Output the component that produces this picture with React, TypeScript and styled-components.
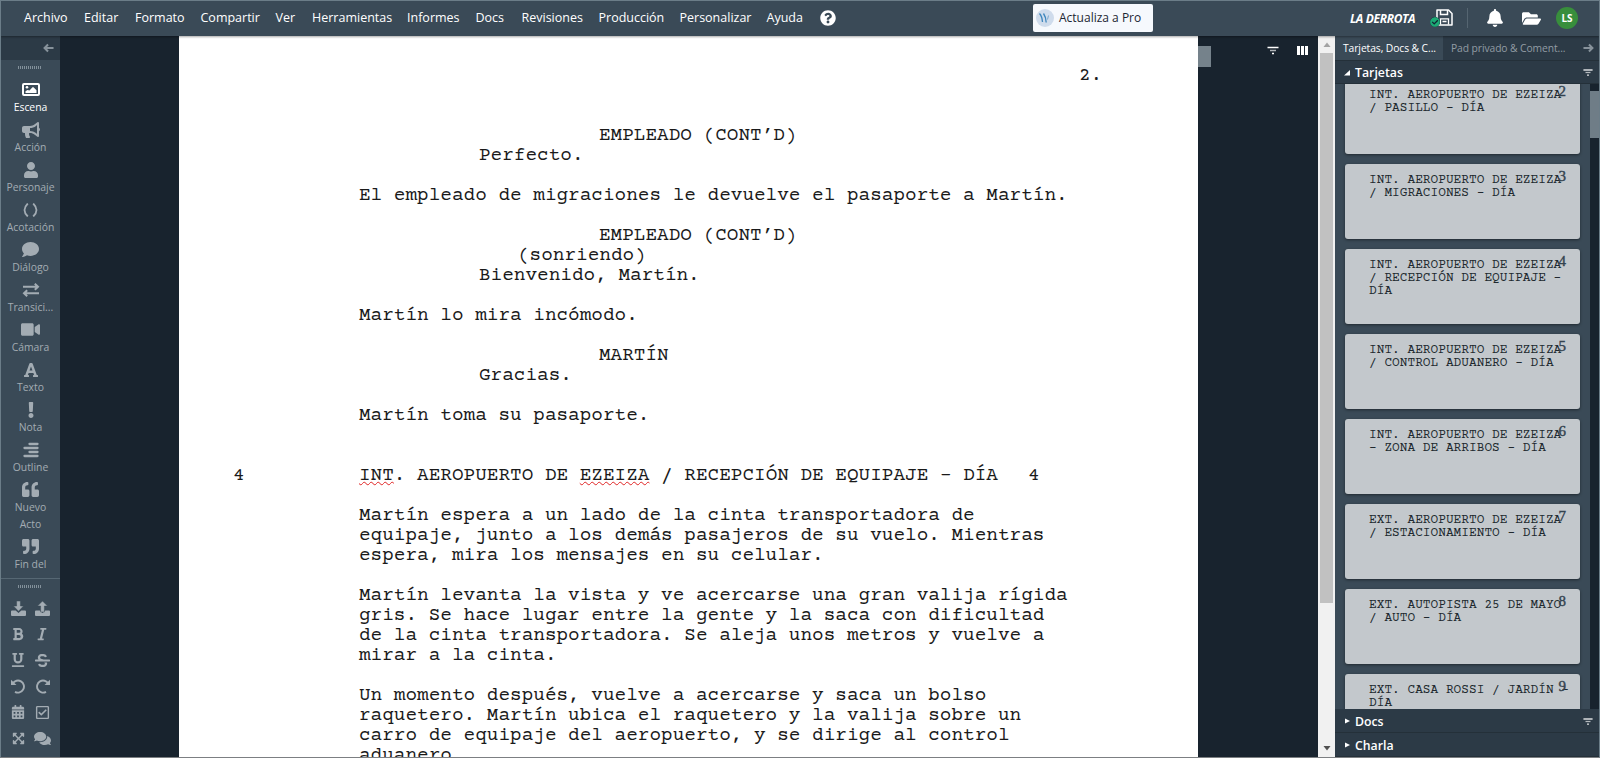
import React from 'react';
import styled, { createGlobalStyle } from 'styled-components';
import {
  FaBell, FaBold, FaBullhorn, FaCalendarAlt, FaCheckCircle, FaComment, FaComments, FaExclamation,
  FaExpandArrowsAlt, FaFolderOpen, FaFont, FaItalic, FaQuestionCircle, FaQuoteLeft, FaQuoteRight,
  FaRegCheckSquare, FaStrikethrough, FaUnderline, FaUser, FaVideo,
} from 'react-icons/fa';

const ui = '"Open Sans", "Noto Sans", sans-serif';
const mono = '"Courier Prime", "Liberation Mono", monospace';

const Global = createGlobalStyle`
  * { box-sizing: border-box; }
  body { margin: 0; background: #18232e; overflow: hidden; }
  svg { display: block; flex: none; }
`;

const Frame = styled.div`
  width: 1600px; height: 758px; display: flex; flex-direction: column; overflow: hidden;
  border: 1px solid #6b7d88; border-bottom-color: #7c7f82;
  background: #18232e; font-family: ${ui}; color: #fff;
`;
const Header = styled.header`
  height: 35px; flex: none; display: flex; align-items: center; background: #3a4a57; padding-bottom: 2px;
  position: relative; z-index: 2; box-shadow: 0 1px 2px rgba(0,0,0,.35);
`;
const Menu = styled.nav`display: flex; width: 815px; padding-left: 23px; align-items: center; height: 33px;`;
const MenuItem = styled.span<{ $w: number }>`
  width: ${p => p.$w}px; font-size: 12.5px; white-space: nowrap; line-height: 18px; flex: none;
`;
const Upgrade = styled.button`
  width: 120px; height: 28px; margin-left: 217px; border: 0; border-radius: 2px; background: #f6f9fd; color: #1c2733;
  padding: 0 0 0 3px; display: flex; align-items: center; gap: 5px; font: 12px ${ui}; white-space: nowrap; flex: none;
`;
const HeaderRight = styled.div`display: flex; align-items: center; margin-left: 197px; height: 33px;`;
const ScriptTitle = styled.span`width: 80px; font: italic 700 12px ${ui}; letter-spacing: -0.35px; white-space: nowrap; padding-top: 1px;`;
const SaveBox = styled.span`position: relative; width: 24px; height: 17px; padding-left: 6px;`;
const SaveBadge = styled.span`position: absolute; left: 0; top: 8px; color: #1ca974; background: #123; border-radius: 50%;`;
const Divider = styled.i`width: 1px; height: 20px; background: #556571; margin: 0 18px 0 13px;`;
const FolderSlot = styled.span`margin: 1px 15px 0 18px;`;
const Avatar = styled.span`
  width: 22px; height: 22px; border-radius: 50%; background: #388e3c; font: 700 10px ${ui};
  display: flex; align-items: center; justify-content: center;
`;
const Body = styled.div`display: flex; flex: 1; min-height: 0;`;

const SideBar = styled.aside`width: 59px; flex: none; background: #3a4a57; display: flex; flex-direction: column; overflow: hidden;`;
const SideTop = styled.div`height: 24px; flex: none; background: #2c3a46; display: flex; align-items: center; justify-content: flex-end; padding: 0 6px 1px 0; color: #87929b;`;
const Grip = styled.i`
  display: block; width: 24px; height: 3px; flex: none; margin: 6px auto 0 17px;
  background: repeating-linear-gradient(90deg, #82909a 0 1px, transparent 1px 2px);
`;
const Elements = styled.div`height: 519px; flex: none; overflow: hidden; border-bottom: 1px solid #566773;`;
const ElementList = styled.div`padding-top: 11px;`;
const Element = styled.div<{ $active?: boolean }>`
  color: ${p => (p.$active ? '#fff' : '#a3acb3')}; text-align: center; font-size: 10.4px; line-height: 17px;
  padding: 0 7px 4px; display: flex; flex-direction: column; align-items: center;
`;
const IconSlot = styled.div`height: 19px; display: flex; align-items: center; justify-content: center;`;
const Tools = styled.div`display: grid; grid-template-columns: 24px 24px; grid-auto-rows: 26px; padding: 7px 0 0 5px; color: #a3acb3;`;
const Tool = styled.span`display: flex; align-items: center; justify-content: center;`;

const Stage = styled.main`flex: 1; display: flex; padding-left: 119px; min-width: 0; overflow: hidden;`;
const Sheet = styled.article`
  width: 1019px; flex: none; background: #fff; color: #1a1a1a; padding-top: 30px;
  font: 19.39px/20px ${mono};
`;
const Line = styled.div<{ $indent: number }>`height: 20px; padding-left: ${p => p.$indent}px; white-space: pre;`;
const SceneLine = styled.div`height: 20px; display: flex; padding-left: 54px; white-space: pre;`;
const SceneNo = styled.span`width: 126px;`;
const SceneText = styled.span`width: 669px;`;
const Misspelt = styled.span`
  text-decoration: underline wavy #e02424; text-decoration-thickness: 1.3px; text-underline-offset: 1px; text-decoration-skip-ink: none;
`;
const StageRight = styled.div`flex: 1; display: flex; padding-top: 10px; justify-content: space-between;`;
const Handle = styled.i`width: 13px; height: 21px; background: #75828b;`;
const ViewTools = styled.div`display: flex; gap: 18px; padding-right: 10px; color: #fff;`;
const Scroll = styled.div`width: 17px; flex: none; background: #f1f1f1; display: flex; flex-direction: column; align-items: center; justify-content: space-between; padding: 5px 0 5px;`;
const Thumb = styled.i`width: 13px; height: 550px; background: #c1c1c1; margin-top: 4px; margin-bottom: auto;`;

const Panel = styled.aside`width: 264px; flex: none; background: #3a4a57; display: flex; flex-direction: column;`;
const Tabs = styled.div`height: 25px; flex: none; display: flex; background: #2c3a46; border-bottom: 1px solid #243039; align-items: center; font-size: 10.3px; letter-spacing: -0.08px; color: #87929b;`;
const Tab = styled.span<{ $active?: boolean }>`
  height: 24px; line-height: 24px; white-space: nowrap; width: ${p => (p.$active ? 108 : 140)}px; padding-left: 8px;
  flex: none; color: ${p => (p.$active ? '#fff' : '#929ca4')}; background: ${p => (p.$active ? '#3a4a57' : 'transparent')};
`;
const Section = styled.div<{ $h: number }>`
  height: ${p => p.$h}px; flex: none; background: #2c3a46; display: flex; align-items: center; border-bottom: 1px solid #243039;
  font-weight: 600; font-size: 12.3px; padding: 1px 6px 0 8px; gap: 4px;
  svg:last-child:not(:first-child) { margin-left: auto; }
`;
const CardArea = styled.div`flex: 1; min-height: 0; display: flex; overflow: hidden;`;
const Cards = styled.div`flex: 1; padding: 0 10px; margin-top: -5px; display: flex; flex-direction: column; gap: 10px;`;
const Card = styled.div`
  position: relative; height: 75px; flex: none; background: #c3c8cc; border-radius: 3px; color: #20282e;
  padding: 10px 0 0 24px; font: 12.83px/13px ${mono}; white-space: pre; box-shadow: 0 1px 3px rgba(0,0,0,.45);
`;
const CardNo = styled.span`position: absolute; right: 14px; top: 5px; font: 15px/15px "Liberation Serif", serif; color: #34434f; -webkit-text-stroke: .4px #34434f;`;
const CardScroll = styled.div`width: 9px; background: #18232e; padding-top: 7px;`;
const CardThumb = styled.div`height: 47px; background: #6f7d87;`;

const Arrow = ({ flip }: { flip?: boolean }) => (
  <svg width="11" height="10" viewBox="0 0 12 10" fill="none" stroke="currentColor" strokeWidth="2.200" transform={flip ? 'scale(-1 1)' : undefined}>
    <path d="M11.5 5H2M5.5 1.2L1.7 5l3.8 3.8" />
  </svg>
);
const Filter = ({ w = 12 }: { w?: number }) => (
  <svg width={w} height="9" viewBox="0 0 12 9" stroke="currentColor" fill="none" strokeWidth="1.5">
    <path d="M.5 1.5h11" /><path d="M3 4.5h6" opacity=".65" /><path d="M5 7.5h2" />
  </svg>
);
const Columns = () => (
  <svg width="11" height="9" viewBox="0 0 11 9" fill="currentColor"><path d="M0 0h3v9H0zM4 0h3v9H4zM8 0h3v9H8z" /></svg>
);
const Save = () => (
  <svg width="17" height="17" viewBox="0 0 17 17" fill="none" stroke="currentColor" strokeWidth="1.500">
    <path d="M1 1h11.500L16 4.500V16H1z" strokeLinejoin="round" /><path d="M4.500 1v4.500h7V1" /><path d="M4.500 15.500V9.800h8v5.700M6.500 12.500h4" strokeWidth="1.300" />
  </svg>
);
const Picture = () => (
  <svg width="18" height="13" viewBox="0 0 18 13"><rect x="1" y="1" width="16" height="11" rx="1" fill="none" stroke="currentColor" strokeWidth="2" />
    <circle cx="5" cy="4.300" r="1.300" fill="currentColor" /><path d="M3.500 10V8.300l2-1.300 2 .6L10.500 4.300h1l3 3V10z" fill="currentColor" /></svg>
);
const Parens = () => (
  <svg width="15" height="14" viewBox="0 0 15 14" fill="none" stroke="currentColor" strokeWidth="1.8"><path d="M4.8.5Q-1.8 7 4.8 13.5M10.2.5Q16.8 7 10.2 13.5" /></svg>
);
const Swap = () => (
  <svg width="18" height="14" viewBox="0 0 18 14" fill="none" stroke="currentColor" strokeWidth="2"><path d="M1 3.8h15M12.8.7L16 3.8l-3.2 3M17 10.2H2M5.2 7.2L2 10.2l3.2 3" /></svg>
);
const Lines = () => (
  <svg width="16" height="16" viewBox="0 0 16 16" stroke="currentColor" strokeWidth="2.3" strokeLinecap="round"><path d="M6.5 2H14.5M1.5 6H14.5M6.5 10H14.5M1.5 14H14.5" /></svg>
);
const Tray = ({ up }: { up?: boolean }) => (
  <svg width="15" height="15" viewBox="0 0 15 15" fill="currentColor">
    <path d="M1 9.500h3.700L7.500 12l2.800-2.500H14q1 0 1 1V14q0 1-1 1H1q-1 0-1-1v-3.500q0-1 1-1z" />
    <path d={up ? 'M5.600 11V5H2.500l5-5 5 5H9.400v6z' : 'M5.600 0v5H2.500l5 5.300 5-5.300H9.400V0z'} stroke="#3a4a57" strokeWidth=".5" />
  </svg>
);
const Turn = ({ redo }: { redo?: boolean }) => (
  <svg width="15" height="15" viewBox="0 0 15 15" fill="none" stroke="currentColor" strokeWidth="1.9" transform={redo ? 'scale(-1 1)' : undefined}>
    <path d="M1.800 4.500A6 6 0 1 1 4 12.800" /><path d="M0 .8v5.200h5.500z" fill="currentColor" stroke="none" />
  </svg>
);
const ProLogo = () => (
  <svg width="18" height="18" viewBox="0 0 18 18"><circle cx="9" cy="9" r="9" fill="#cfdcec" />
    <path d="M3.500 4.500Q6 7 6.500 13M7.500 4.500Q10 8 10.200 13.500" stroke="#3d86bd" strokeWidth="1.300" fill="none" /><path d="M11.500 10.500l1-4" stroke="#7ba8ce" /></svg>
);
const Tri = ({ d, size = 8, color = '#fff' }: { d: string; size?: number; color?: string }) => (
  <svg width={size} height={size} viewBox="0 0 8 8" fill={color}><path d={d} /></svg>
);

const menu: [string, number][] = [
  ['Archivo', 60], ['Editar', 51], ['Formato', 65.5], ['Compartir', 75], ['Ver', 36.5], ['Herramientas', 95], ['Informes', 68.5],
  ['Docs', 46], ['Revisiones', 77], ['Producción', 81], ['Personalizar', 87], ['Ayuda', 53],
];
const elements: { icon: React.ReactNode; label: string }[] = [
  { icon: <Picture />, label: 'Escena' },
  { icon: <FaBullhorn size={18} />, label: 'Acción' },
  { icon: <FaUser size={16} />, label: 'Personaje' },
  { icon: <Parens />, label: 'Acotación' },
  { icon: <FaComment size={17} />, label: 'Diálogo' },
  { icon: <Swap />, label: 'Transici...' },
  { icon: <FaVideo size={19} />, label: 'Cámara' },
  { icon: <FaFont size={16} />, label: 'Texto' },
  { icon: <FaExclamation size={16} />, label: 'Nota' },
  { icon: <Lines />, label: 'Outline' },
  { icon: <FaQuoteLeft size={17} />, label: 'Nuevo Acto' },
  { icon: <FaQuoteRight size={17} />, label: 'Fin del' },
];
const tools = [
  <Tray />, <Tray up />, <FaBold size={14} />, <FaItalic size={14} />, <FaUnderline size={14} />, <FaStrikethrough size={15} />,
  <Turn />, <Turn redo />, <FaCalendarAlt size={14} />, <FaRegCheckSquare size={15} />, <FaExpandArrowsAlt size={13} />, <FaComments size={17} />,
];

const ACTION = 180, DIALOGUE = 300, PAREN = 339, CHARACTER = 420;
const before: [number, string][] = [
  [900, '2.'], [0, ''], [0, ''],
  [CHARACTER, 'EMPLEADO (CONT’D)'], [DIALOGUE, 'Perfecto.'], [0, ''],
  [ACTION, 'El empleado de migraciones le devuelve el pasaporte a Martín.'], [0, ''],
  [CHARACTER, 'EMPLEADO (CONT’D)'], [PAREN, '(sonriendo)'], [DIALOGUE, 'Bienvenido, Martín.'], [0, ''],
  [ACTION, 'Martín lo mira incómodo.'], [0, ''],
  [CHARACTER, 'MARTÍN'], [DIALOGUE, 'Gracias.'], [0, ''],
  [ACTION, 'Martín toma su pasaporte.'], [0, ''], [0, ''],
];
const after = [
  '', 'Martín espera a un lado de la cinta transportadora de', 'equipaje, junto a los demás pasajeros de su vuelo. Mientras',
  'espera, mira los mensajes en su celular.', '',
  'Martín levanta la vista y ve acercarse una gran valija rígida', 'gris. Se hace lugar entre la gente y la saca con dificultad',
  'de la cinta transportadora. Se aleja unos metros y vuelve a', 'mirar a la cinta.', '',
  'Un momento después, vuelve a acercarse y saca un bolso', 'raquetero. Martín ubica el raquetero y la valija sobre un',
  'carro de equipaje del aeropuerto, y se dirige al control', 'aduanero.',
];
const cards = [
  'INT. AEROPUERTO DE EZEIZA\n/ PASILLO - DÍA', 'INT. AEROPUERTO DE EZEIZA\n/ MIGRACIONES - DÍA',
  'INT. AEROPUERTO DE EZEIZA\n/ RECEPCIÓN DE EQUIPAJE -\nDÍA', 'INT. AEROPUERTO DE EZEIZA\n/ CONTROL ADUANERO - DÍA',
  'INT. AEROPUERTO DE EZEIZA\n- ZONA DE ARRIBOS - DÍA', 'EXT. AEROPUERTO DE EZEIZA\n/ ESTACIONAMIENTO - DÍA',
  'EXT. AUTOPISTA 25 DE MAYO\n/ AUTO - DÍA', 'EXT. CASA ROSSI / JARDÍN -\nDÍA',
];

export default function App() {
  return (
    <Frame>
      <Global />
      <Header>
        <Menu>
          {menu.map(([label, w]) => <MenuItem key={label} $w={w}>{label}</MenuItem>)}
          <FaQuestionCircle size={16} />
        </Menu>
        <Upgrade><ProLogo />Actualiza a Pro</Upgrade>
        <HeaderRight>
          <ScriptTitle>LA DERROTA</ScriptTitle>
          <SaveBox><Save /><SaveBadge><FaCheckCircle size={10} /></SaveBadge></SaveBox>
          <Divider />
          <FaBell size={18} />
          <FolderSlot><FaFolderOpen size={19} /></FolderSlot>
          <Avatar>LS</Avatar>
        </HeaderRight>
      </Header>
      <Body>
        <SideBar>
          <SideTop><Arrow /></SideTop>
          <Elements>
            <Grip />
            <ElementList>
              {elements.map((e, i) => (
                <Element key={e.label} $active={i === 0}><IconSlot>{e.icon}</IconSlot>{e.label}</Element>
              ))}
            </ElementList>
          </Elements>
          <Grip />
          <Tools>{tools.map((t, i) => <Tool key={i}>{t}</Tool>)}</Tools>
        </SideBar>
        <Stage>
          <Sheet>
            {before.map(([indent, text], i) => <Line key={i} $indent={indent}>{text}</Line>)}
            <SceneLine>
              <SceneNo>4</SceneNo>
              <SceneText><Misspelt>INT</Misspelt>. AEROPUERTO DE <Misspelt>EZEIZA</Misspelt> / RECEPCIÓN DE EQUIPAJE - DÍA</SceneText>
              <span>4</span>
            </SceneLine>
            {after.map((text, i) => <Line key={i} $indent={ACTION}>{text}</Line>)}
          </Sheet>
          <StageRight><Handle /><ViewTools><Filter /><Columns /></ViewTools></StageRight>
        </Stage>
        <Scroll>
          <Tri d="M4 1.500L7.500 6h-7z" color="#a3a3a3" />
          <Thumb />
          <Tri d="M4 6.500L7.500 2h-7z" color="#505050" />
        </Scroll>
        <Panel>
          <Tabs><Tab $active>Tarjetas, Docs &amp; C...</Tab><Tab>Pad privado &amp; Coment...</Tab><Arrow flip /></Tabs>
          <Section $h={23}><Tri d="M7 1v5.500H1z" />Tarjetas<Filter w={10} /></Section>
          <CardArea>
            <Cards>{cards.map((c, i) => <Card key={i}>{c}<CardNo>{i + 2}</CardNo></Card>)}</Cards>
            <CardScroll><CardThumb /></CardScroll>
          </CardArea>
          <Section $h={24}><Tri d="M2 1.500L7 4 2 6.500z" />Docs<Filter w={10} /></Section>
          <Section $h={24}><Tri d="M2 1.500L7 4 2 6.500z" />Charla</Section>
        </Panel>
      </Body>
    </Frame>
  );
}
